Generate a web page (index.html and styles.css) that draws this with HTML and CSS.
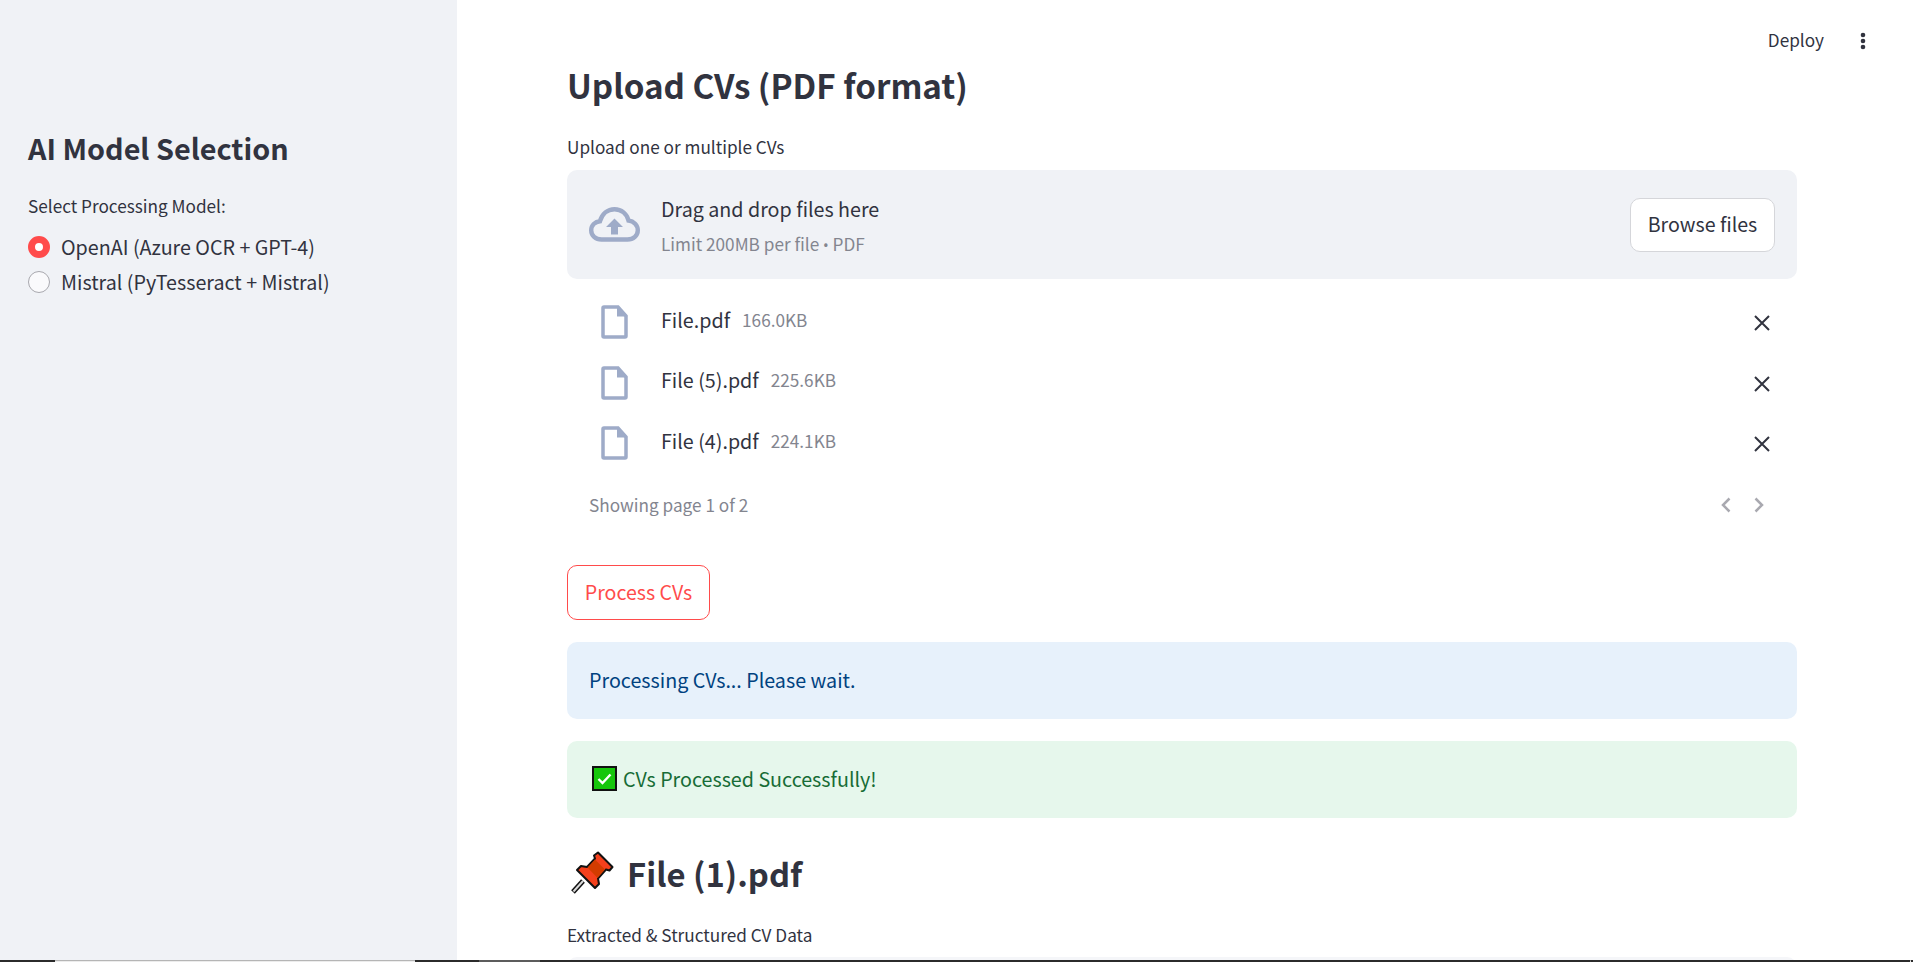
FILE: index.html
```html
<!DOCTYPE html>
<html lang="en">
<head>
    <meta charset="UTF-8">
    <meta name="viewport" content="width=device-width, initial-scale=1.0">
    <title>CV Processing</title>
    <link rel="stylesheet" href="styles.css">
</head>
<body>
    <div class="app">
        <aside class="sidebar">
            <h2 class="sidebar-title">AI Model Selection</h2>
            <p class="radio-label">Select Processing Model:</p>
            <div class="radio-row">
                <span class="radio radio-on"></span>
                <span>OpenAI (Azure OCR + GPT-4)</span>
            </div>
            <div class="radio-row">
                <span class="radio"></span>
                <span>Mistral (PyTesseract + Mistral)</span>
            </div>
        </aside>

        <main class="main">
            <div class="topbar">
                <span class="deploy">Deploy</span>
                <svg class="menu-dots" width="6" height="18" viewBox="0 0 6 18"><circle cx="3" cy="3" r="2.3"/><circle cx="3" cy="9" r="2.3"/><circle cx="3" cy="15" r="2.3"/></svg>
            </div>

            <div class="content">
                <h1 class="page-title">Upload CVs (PDF format)</h1>
                <p class="small-label">Upload one or multiple CVs</p>

                <div class="dropzone">
                    <svg class="cloud" width="51" height="35" viewBox="0 0 51 35">
                        <path d="M12.500 32.500C6.500 32.500 2.200 28.500 2.200 23.300C2.200 18.300 6 14.600 11 14.200C13 7 18.500 2.200 25.500 2.200C32.500 2.200 38 6.800 39.500 13.500C44.800 14.200 48.800 18.200 48.800 23.300C48.800 28.500 44.500 32.500 38.500 32.500Z" fill="none" stroke="#9eabc8" stroke-width="4.400"/>
                        <path d="M25.500 11.500L34 20H29V27.500H22V20H17Z" fill="#9eabc8"/>
                    </svg>
                    <div class="drop-text">
                        <div class="drop-main">Drag and drop files here</div>
                        <div class="drop-hint">Limit 200MB per file <span class="dot">•</span> PDF</div>
                    </div>
                    <button class="browse" type="button">Browse files</button>
                </div>

                <ul class="file-list">
                    <li class="file-row">
                        <svg class="file-icon" width="27" height="34" viewBox="0 0 27 34"><path d="M3 2H17L25 11V31C25 31.600 24.600 32 24 32H3C2.400 32 2 31.600 2 31V3C2 2.400 2.400 2 3 2Z" fill="none" stroke="#9eabc8" stroke-width="3.500"/><path d="M16 1L26.500 11.500H16Z" fill="#9eabc8"/></svg>
                        <span class="file-name">File.pdf</span>
                        <span class="file-size">166.0KB</span>
                        <svg class="file-x" width="16" height="16" viewBox="0 0 16 16"><path d="M1 1L15 15M15 1L1 15" stroke="#31333f" stroke-width="2"/></svg>
                    </li>
                    <li class="file-row">
                        <svg class="file-icon" width="27" height="34" viewBox="0 0 27 34"><path d="M3 2H17L25 11V31C25 31.600 24.600 32 24 32H3C2.400 32 2 31.600 2 31V3C2 2.400 2.400 2 3 2Z" fill="none" stroke="#9eabc8" stroke-width="3.500"/><path d="M16 1L26.500 11.500H16Z" fill="#9eabc8"/></svg>
                        <span class="file-name">File (5).pdf</span>
                        <span class="file-size">225.6KB</span>
                        <svg class="file-x" width="16" height="16" viewBox="0 0 16 16"><path d="M1 1L15 15M15 1L1 15" stroke="#31333f" stroke-width="2"/></svg>
                    </li>
                    <li class="file-row">
                        <svg class="file-icon" width="27" height="34" viewBox="0 0 27 34"><path d="M3 2H17L25 11V31C25 31.600 24.600 32 24 32H3C2.400 32 2 31.600 2 31V3C2 2.400 2.400 2 3 2Z" fill="none" stroke="#9eabc8" stroke-width="3.500"/><path d="M16 1L26.500 11.500H16Z" fill="#9eabc8"/></svg>
                        <span class="file-name">File (4).pdf</span>
                        <span class="file-size">224.1KB</span>
                        <svg class="file-x" width="16" height="16" viewBox="0 0 16 16"><path d="M1 1L15 15M15 1L1 15" stroke="#31333f" stroke-width="2"/></svg>
                    </li>
                </ul>

                <div class="pager">
                    <span>Showing page 1 of 2</span>
                    <div class="pager-arrows">
                        <svg width="10" height="16" viewBox="0 0 10 16"><path d="M8.500 1.500L2 8L8.500 14.500" fill="none" stroke="#a9a9b0" stroke-width="2.500"/></svg>
                        <svg width="10" height="16" viewBox="0 0 10 16"><path d="M1.500 1.500L8 8L1.500 14.500" fill="none" stroke="#a9a9b0" stroke-width="2.500"/></svg>
                    </div>
                </div>

                <button class="process" type="button">Process CVs</button>

                <div class="alert alert-info">Processing CVs... Please wait.</div>
                <div class="alert alert-success">
                    <svg class="check" width="25" height="25" viewBox="0 0 25 25"><rect x="1" y="1" width="23" height="23" fill="#16c60c" stroke="#111" stroke-width="2"/><path d="M6.500 13L10.500 17L18.500 8.500" fill="none" stroke="#fff" stroke-width="2.400"/></svg>
                    <span>CVs Processed Successfully!</span>
                </div>

                <h2 class="file-title">
                    <svg class="pin" width="43" height="43" viewBox="0 0 43 43">
                        <path d="M2 41L12 30" stroke="#111" stroke-width="5"/>
                        <path d="M2.500 40.500L12 30" stroke="#d8d8d8" stroke-width="2"/>
                        <path d="M27 1.500L41.500 16L38.500 19.500L35 18.500L27 27.500L28 33L24 37L6 19L10 15L16 16L24 7.500L23 4.500Z" fill="#f4401c" stroke="#111" stroke-width="2" stroke-linejoin="round"/>
                        <path d="M16.500 16.500L24 8.500L34 18.500L26.500 27Z" fill="#d23c00"/>
                    </svg>
                    <span>File (1).pdf</span>
                </h2>
                <p class="small-label extracted">Extracted &amp; Structured CV Data</p>
                <div class="data-box"></div>
            </div>
        </main>
    </div>
    <div class="taskbar-edge">
        <span class="edge-dark edge-a"></span>
        <span class="edge-light edge-b"></span>
        <span class="edge-dark edge-c"></span>
        <span class="edge-mid edge-d"></span>
        <span class="edge-dark edge-e"></span>
        <span class="edge-light edge-tick"></span>
        <span class="edge-dark edge-f"></span>
    </div>
</body>
</html>
```

FILE: styles.css
```css
* {
    box-sizing: border-box;
}
html, body {
    margin: 0;
    height: 962px;
    overflow: hidden;
}
body {
    display: flex;
    flex-direction: column;
    font-family: "Noto Sans CJK SC", "Noto Sans", sans-serif;
    color: #31333f;
    background: #fff;
}
h1, h2, p, ul {
    margin: 0;
    padding: 0;
}
.app {
    flex: 1;
    display: flex;
    min-height: 0;
    overflow: hidden;
}

/* sidebar */
.sidebar {
    width: 457px;
    flex-shrink: 0;
    background: #f0f2f6;
    padding: 125px 28px 0;
}
.sidebar-title {
    font-size: 28.800px;
    font-weight: 600;
    line-height: 46px;
}
.radio-label {
    font-size: 17.200px;
    line-height: 24px;
    margin-top: 23px;
}
.radio-row {
    display: flex;
    align-items: center;
    gap: 11px;
    height: 35px;
    font-size: 19.700px;
}
.radio-label + .radio-row {
    margin-top: 11px;
}
.radio {
    width: 22px;
    height: 22px;
    border-radius: 50%;
    background: #fafafc;
    border: 1px solid #a8a8ae;
}
.radio-on {
    background: #fff;
    border: 7px solid #ff4b4b;
}

/* main area */
.main {
    flex: 1;
    min-width: 0;
}
.topbar {
    height: 0;
    display: flex;
    justify-content: flex-end;
    align-items: flex-start;
    padding-right: 47px;
    gap: 36px;
}
.deploy {
    font-size: 17.200px;
    line-height: 24px;
    margin-top: 28px;
}
.menu-dots {
    margin-top: 32px;
    fill: #31333f;
}
.content {
    width: 1230px;
    margin-left: 110px;
    padding-top: 59px;
}
.page-title {
    font-size: 33.200px;
    font-weight: 600;
    line-height: 52px;
}
.small-label {
    font-size: 17.200px;
    line-height: 24px;
}
.page-title + .small-label {
    margin-top: 24px;
}
.dropzone {
    display: flex;
    align-items: center;
    height: 109px;
    margin-top: 11px;
    background: #f0f2f6;
    border-radius: 10px;
    padding: 0 22px;
}
.cloud {
    flex-shrink: 0;
}
.drop-text {
    flex: 1;
    margin-left: 21px;
}
.drop-main {
    font-size: 19.700px;
    line-height: 32px;
}
.drop-hint {
    font-size: 17.200px;
    line-height: 24px;
    color: #83858f;
    margin-top: 7px;
}
.dot {
    font-family: "Noto Sans", sans-serif;
    font-size: 15px;
}
.browse {
    width: 145px;
    height: 54px;
    padding-bottom: 3px;
    font: inherit;
    font-size: 19.600px;
    color: #31333f;
    background: #fff;
    border: 1px solid #d5d6da;
    border-radius: 10px;
}

.file-list {
    list-style: none;
    margin-top: 13px;
}
.file-row {
    display: flex;
    align-items: center;
    height: 60.500px;
    padding-left: 34px;
}
.file-name {
    margin-left: 33px;
    margin-bottom: 6px;
    font-size: 19.700px;
}
.file-size {
    margin-left: 12px;
    margin-bottom: 6px;
    font-size: 17.200px;
    color: #83858f;
}
.file-x {
    margin-left: auto;
    margin-right: 27px;
    margin-top: 2px;
}
.pager {
    display: flex;
    justify-content: space-between;
    align-items: center;
    height: 32px;
    margin-top: 15px;
    padding: 0 33px 0 22px;
    font-size: 17.200px;
    color: #83858f;
}
.pager-arrows {
    display: flex;
    gap: 23px;
}
.process {
    display: block;
    width: 143px;
    height: 55px;
    margin-top: 44px;
    padding-bottom: 3px;
    font: inherit;
    font-size: 19.600px;
    color: #ff4b4b;
    background: #fff;
    border: 1px solid #ff4b4b;
    border-radius: 10px;
}
.alert {
    display: flex;
    align-items: center;
    height: 77px;
    margin-top: 22px;
    padding-left: 22px;
    padding-bottom: 2px;
    border-radius: 10px;
    font-size: 19.700px;
}
.alert-info {
    background: #e7f1fb;
    color: #004280;
}
.alert-success {
    background: #e6f7ec;
    color: #176c36;
    gap: 6px;
    padding-left: 25px;
}
.file-title {
    display: flex;
    align-items: center;
    gap: 13px;
    margin-top: 32px;
    height: 46px;
    padding-left: 4px;
    font-size: 32.800px;
    font-weight: 600;
}
.extracted {
    margin-top: 27px;
}
.data-box {
    height: 60px;
    margin-top: 10px;
    background: #f5f6f9;
    border-radius: 10px;
}

/* strip of the window below the page */
.taskbar-edge {
    flex-shrink: 0;
    display: flex;
    height: 2px;
}
.edge-dark { background: #2b2b2b; }
.edge-light { background: #ececec; border-top: 1px solid #b5b5b5; }
.edge-mid { background: #5c5c5c; }
.edge-a { width: 55px; }
.edge-b { width: 360px; }
.edge-c { width: 64px; }
.edge-d { width: 61px; }
.edge-e { flex: 1; }
.edge-tick { width: 1px; }
.edge-f { width: 2px; }
```
